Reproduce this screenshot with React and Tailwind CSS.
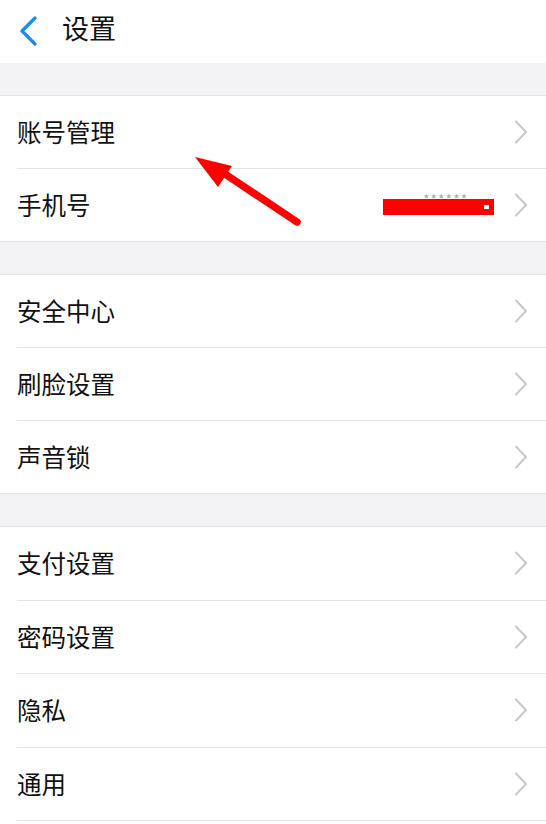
import React from "react";

const font = { fontFamily: '"Noto Sans CJK SC", "Noto Sans", sans-serif' };

function Chevron() {
  return (
    <svg width="14" height="24" viewBox="0 0 14 24" className="shrink-0">
      <path d="M2 1.5 L12 12 L2 22.5" fill="none" stroke="#c8c8cc" strokeWidth="2" strokeLinecap="round" strokeLinejoin="round" />
    </svg>
  );
}

function Row({ label, last, h = "h-[72px]", extra }) {
  return (
    <div className="flex flex-col">
      <div className={`flex items-center justify-between pl-[17px] pr-[18px] ${h}`}>
        <span className="text-[24.5px] leading-none text-[#111]">{label}</span>
        <div className="flex items-center gap-[20px]">
          {extra}
          <Chevron />
        </div>
      </div>
      {!last && <div className="ml-[17px] h-px bg-[#e4e4e6]" />}
    </div>
  );
}

function Gap() {
  return <div className="h-[32px] bg-[#f3f3f7]" />;
}

function Section({ children, open }) {
  return (
    <div className={`border-t border-[#e2e2e4] bg-white ${open ? "" : "border-b"}`}>
      {children}
    </div>
  );
}

export default function App() {
  const phone = (
    <div className="relative w-[111px] h-[16px] mt-[3px]">
      <span className="absolute left-[40px] -top-[10px] text-[14px] tracking-[1px] text-[#aaa]">******</span>
      <div className="absolute inset-0 bg-[#ff0000]" />
      <div className="absolute left-[101px] top-[6px] w-[5px] h-[4px] bg-white" />
    </div>
  );
  return (
    <div className="relative w-[546px] h-[824px] overflow-hidden bg-white" style={font}>
      <div className="flex items-center h-[63px] bg-white">
        <svg width="20" height="30" viewBox="0 0 20 30" className="ml-[18px] mt-[-2px]">
          <path d="M17 2 L4 15 L17 28" fill="none" stroke="#1a8cf0" strokeWidth="3.2" strokeLinecap="round" strokeLinejoin="round" />
        </svg>
        <span className="ml-[24px] text-[27px] leading-none text-[#111] mt-[-8px]">设置</span>
      </div>
      <Gap />
      <Section>
        <Row label="账号管理" />
        <Row label="手机号" last extra={phone} />
      </Section>
      <Gap />
      <Section>
        <Row label="安全中心" />
        <Row label="刷脸设置" />
        <Row label="声音锁" last />
      </Section>
      <Gap />
      <Section open>
        <Row label="支付设置" h="h-[72.5px]" />
        <Row label="密码设置" h="h-[72.5px]" />
        <Row label="隐私" h="h-[72.5px]" />
        <Row label="通用" h="h-[72.5px]" />
        <div className="h-[20px]" />
      </Section>
      <svg className="absolute left-0 top-0 pointer-events-none" width="546" height="824" viewBox="0 0 546 824">
        <line x1="297" y1="222" x2="222" y2="172" stroke="#ff0000" strokeWidth="7.5" strokeLinecap="round" />
        <polygon points="195,157 232,166 218,187" fill="#ff0000" />
      </svg>
    </div>
  );
}
